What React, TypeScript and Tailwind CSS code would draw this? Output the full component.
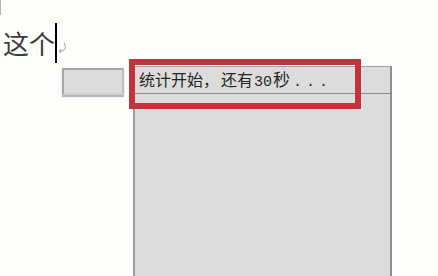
import React from 'react';

const cjk = { fontFamily: '"Noto Sans CJK SC", "Noto Sans", sans-serif' };
const mono = { fontFamily: '"Liberation Mono", monospace' };

function Caret() {
  return (
    <span className="relative inline-block w-[2px] h-[40px] bg-black align-middle">
      {/* little return hook next to the caret */}
      <svg className="absolute left-[3px] top-[19px]" width="9" height="12" viewBox="0 0 9 12">
        <path d="M6 1 C8 4 8 8 4 9 L2 9 M3 7 L1.5 9 L3 11" fill="none" stroke="#9a9a9a" strokeWidth="1" />
      </svg>
    </span>
  );
}

export default function App() {
  return (
    <div className="relative w-[438px] h-[276px] overflow-hidden bg-[#fdfdfc]" style={cjk}>
      <div className="absolute left-0 top-0 w-px h-[15px] bg-[#b5b5b5]" />

      <div className="flex items-center pl-[3px] pt-[23px] h-[63px]">
        <span className="text-[26px] leading-none text-[#3c3c3c]">这个</span>
        <Caret />
      </div>

      <div className="flex items-start pl-[62px] gap-[9px]">
        <div className="mt-[5px] w-[62px] h-[27px] bg-[#dcdcdc] border-2 border-t-[#a6a6a6] border-l-[#a6a6a6] border-b-[#cfcfcf] border-r-[#bdbdbd] shadow-[0_2px_1px_#b8b8b8]" />

        <div className="w-[259px] h-[214px] mt-[3px] bg-[#dcdcdc] border-x-2 border-l-[#9c9c9c] border-r-[#8e8e8e] border-t border-t-[#a0a0a0]">
          <div className="h-[27px] flex items-center pl-[4px] border-b border-[#8a8a8a] text-[16px] text-[#262626] whitespace-nowrap">
            <span className="leading-none">
              统计开始，<span className="ml-[2px]">还有</span>
              <span className="ml-[1px] text-[15px]" style={mono}>30</span>
              <span className="ml-[1px] text-[17px]">秒</span>
              <span className="ml-[3px] text-[15px] tracking-[4px]" style={mono}>...</span>
            </span>
          </div>
        </div>
      </div>

      {/* red annotation box */}
      <div className="absolute left-[129px] top-[59px] w-[232px] h-[50px] border-[6px] border-[#c3333b]" />
    </div>
  );
}
